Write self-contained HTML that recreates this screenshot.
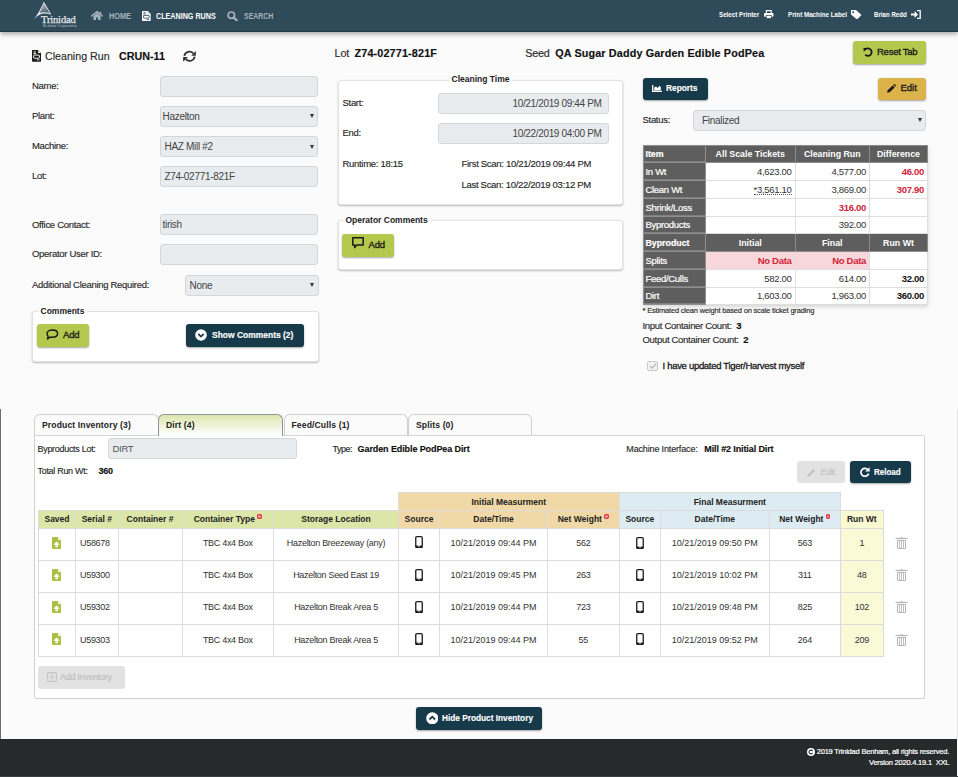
<!DOCTYPE html>
<html><head><meta charset="utf-8">
<style>
*{box-sizing:border-box;margin:0;padding:0}
html,body{width:958px;height:777px;overflow:hidden}
body{background:#fbfbfb;font-family:"Liberation Sans",sans-serif;color:#333;position:relative;font-size:10px}
.a{position:absolute;white-space:nowrap}
.t{position:absolute;white-space:nowrap;line-height:12px;height:12px;font-size:9.5px;letter-spacing:-0.3px;color:#2a2a2a;-webkit-text-stroke:0.15px currentColor}
#hdr{position:absolute;left:0;top:0;width:958px;height:32px;background:#2f4a59;border-bottom:1px solid #1f3947;box-shadow:0 2px 5px rgba(0,0,0,.35)}
.nav{position:absolute;top:11.3px;line-height:10px;font-size:8.5px;font-weight:bold;color:#a6b3ba;letter-spacing:0;transform-origin:0 0}
.navw{color:#fff}
.navr{position:absolute;top:9.6px;line-height:10px;font-size:8px;font-weight:bold;color:#fff;letter-spacing:0;transform-origin:0 0}
.inp{position:absolute;background:#e9ecef;border:1px solid #d3d7da;border-radius:3px;font-size:10px;letter-spacing:-0.3px;color:#444;padding-left:1.5px;line-height:20px;white-space:nowrap}
.sel:after{content:"";position:absolute;right:3.3px;top:7.8px;border-left:2.5px solid transparent;border-right:2.5px solid transparent;border-top:4px solid #333}
.fs{position:absolute;background:#fff;border:1px solid #e2e2e2;border-radius:3px;box-shadow:0 1px 2px rgba(0,0,0,.25)}
.lg{position:absolute;font-size:8.5px;font-weight:bold;color:#222;background:linear-gradient(#fbfbfb 50%,#fff 50%);padding:0 3px;white-space:nowrap;line-height:11px}
.btn{position:absolute;border-radius:3px;white-space:nowrap;box-shadow:0 1px 2px rgba(0,0,0,.35)}
.gbtn{background:#b4c84e;color:#222}
.dbtn{background:#173a4b;color:#fff;font-weight:bold}
.ybtn{background:#dcb24a;color:#222}
table{border-collapse:collapse;position:absolute;table-layout:fixed}
#st td{height:17.75px;padding-bottom:2px;border:1px solid #dedede;font-size:9.5px;letter-spacing:-0.3px;text-align:right;padding:0 3px;color:#333;background:#fff;white-space:nowrap;overflow:hidden}
#st td.h{background:#5e5e5e;color:#fff;font-weight:bold;text-align:center;font-size:8.8px;letter-spacing:0;border-color:#8c8c8c}
#st td.c{background:#5e5e5e;color:#fff;text-align:left;border-color:#8f8f8f;padding-left:2px;-webkit-text-stroke:0.2px #fff;box-shadow:inset 0 -0.7px 0 #8a8a8a}
#st td.c.h{font-weight:bold}
.red{color:#d0243a !important;font-weight:bold}
.pink{background:#f8d7da !important}
#it td{border:1px solid #dcdcdc;font-size:9px;letter-spacing:-0.3px;text-align:center;color:#333;background:#fff;white-space:nowrap;overflow:hidden}
#it tr.r td{height:32.2px;padding-bottom:2px}
#it td.dt{letter-spacing:0}
#it td.gh{background:#dce6a9;font-weight:bold;font-size:8.5px;letter-spacing:0;color:#222;height:17.5px}
#it td.th{background:#f0d9a6;font-weight:bold;font-size:8.5px;letter-spacing:0;color:#222}
#it td.bh{background:#dcecf2;font-weight:bold;font-size:8.5px;letter-spacing:0;color:#222}
#it td.yh{background:#fafad2;font-weight:bold;font-size:8.5px;letter-spacing:0;color:#222}
#it td.y{background:#fafad6}
#it td.n{border:none;background:transparent}
.dot{display:inline-block;width:4.5px;height:4.5px;border-radius:50%;background:#e02d3c;position:relative;top:-3.5px;margin-left:2.5px;box-shadow:inset 0 0 0 1.2px #e02d3c, inset 0 0 0 3px #f7b9bf}
.tab{position:absolute;top:413.5px;height:21.5px;border:1px solid #cfcfcf;border-bottom:none;border-radius:6px 6px 0 0;background:#fbfbfb;font-size:8.6px;font-weight:bold;color:#222;line-height:20px;padding-left:7px;letter-spacing:0.12px;white-space:nowrap}
</style></head><body>
<div id="hdr">
  <svg class="a" style="left:0;top:0" width="80" height="30" viewBox="0 0 80 30">
    <defs><linearGradient id="lg1" x1="0" y1="0" x2="0.3" y2="1"><stop offset="0" stop-color="#d8dfe3"/><stop offset="1" stop-color="#3d5866"/></linearGradient></defs>
    <path d="M43.7 2.2 L50.8 14.4 Q44 12.6 38.5 14 Q41.5 8 43.7 2.2 Z" fill="url(#lg1)"/>
    <path d="M43.7 2.2 Q39 13 32.9 20.6 Q38 14.5 43 13.6 Q47.5 13.2 50.8 14.4 L49.8 13.2 Q45 11.6 39.5 13 Q42.5 8 43.7 2.2 Z" fill="#e8edf0"/>
    <path d="M43.7 2.2 L50.8 14.4" stroke="#e8edf0" stroke-width="0.9"/>
  </svg>
  <div class="a" style="left:41px;top:14.5px;font-family:'Liberation Serif',serif;font-size:10.5px;line-height:10px;color:#e3e8eb;letter-spacing:-0.15px;-webkit-text-stroke:0.25px #e3e8eb">Trinidad</div>
  <div class="a" style="left:43px;top:23.5px;font-family:'Liberation Serif',serif;font-size:3.6px;line-height:4px;color:#c3cdd2;letter-spacing:0.2px">Benham Corporation</div>
  <svg class="a" style="left:91px;top:11px" width="12" height="9.2" viewBox="0 0 12 9.2"><path d="M0.6 5 L6 0.6 L11.4 5" stroke="#a6b3ba" stroke-width="1.5" fill="none" stroke-linecap="round"/><rect x="8.6" y="0.8" width="1.6" height="2.8" fill="#a6b3ba"/><path d="M2.4 4.9 L6 2 L9.6 4.9 V9.2 H7 V6.6 H5 V9.2 H2.4 Z" fill="#a6b3ba"/></svg>
  <div class="nav" style="left:109px;transform:scaleX(0.863)">HOME</div>
  <svg class="a" style="left:142.1px;top:10.8px" width="8.7" height="10" viewBox="0 0 8.7 10"><path d="M0 0.5 Q0 0 0.5 0 H5.7 L8.7 3 V9.5 Q8.7 10 8.2 10 H0.5 Q0 10 0 9.5 Z" fill="#fff"/><path d="M5.7 0 V3 H8.7" fill="#c9d1d5"/><rect x="1.4" y="1.3" width="2.4" height="0.8" fill="#2f4a59"/><rect x="1.4" y="2.6" width="2.4" height="0.8" fill="#2f4a59"/><rect x="1.5" y="4.4" width="5.7" height="2.7" rx="0.5" fill="none" stroke="#2f4a59" stroke-width="0.85"/><rect x="4.8" y="8" width="2.4" height="0.8" fill="#2f4a59"/></svg>
  <div class="nav navw" style="left:156.4px;transform:scaleX(0.843)">CLEANING RUNS</div>
  <svg class="a" style="left:227px;top:11px" width="11" height="10" viewBox="0 0 11 10"><circle cx="4.3" cy="4.2" r="3.2" stroke="#a6b3ba" stroke-width="1.7" fill="none"/><path d="M6.7 6.6 L9.8 9.4" stroke="#a6b3ba" stroke-width="2.2" stroke-linecap="round"/></svg>
  <div class="nav" style="left:244px;transform:scaleX(0.816)">SEARCH</div>
  <div class="navr" style="left:718.7px;transform:scaleX(0.779)">Select Printer</div>
  <svg class="a" style="left:764px;top:10px" width="9.5" height="8.5" viewBox="0 0 9.5 8.5"><path d="M2.3 3 V0.6 H7.2 V3" fill="none" stroke="#fff" stroke-width="1.1"/><rect x="0" y="3" width="9.5" height="3.8" rx="1" fill="#fff"/><rect x="2.2" y="5.4" width="5.1" height="3.1" fill="#fff" stroke="#2f4a59" stroke-width="0.7"/></svg>
  <div class="navr" style="left:788px;transform:scaleX(0.780)">Print Machine Label</div>
  <svg class="a" style="left:851px;top:9.5px" width="10.5" height="9.5" viewBox="0 0 10.5 9.5"><path d="M0 0.5 Q0 0 0.5 0 H5 L10.5 5 L6 9.5 L0 4.5 Z" fill="#fff"/><circle cx="2.2" cy="2.2" r="1" fill="#2f4a59"/></svg>
  <div class="navr" style="left:874.2px;transform:scaleX(0.768)">Brian Redd</div>
  <svg class="a" style="left:911px;top:10px" width="10" height="9" viewBox="0 0 10 9"><path d="M0 3.4 H3.6 V1 L7 4.5 L3.6 8 V5.6 H0 Z" fill="#fff"/><path d="M6 0.7 H9.2 V8.3 H6" stroke="#fff" stroke-width="1.3" fill="none"/></svg>
</div>

<!-- Title row -->
<svg class="a" style="left:31.9px;top:50px" width="9" height="11.7" viewBox="0 0 9 11.7"><path d="M0 0.6 Q0 0 0.6 0 H6 L9 3 V11.1 Q9 11.7 8.4 11.7 H0.6 Q0 11.7 0 11.1 Z" fill="#1c1c1c"/><path d="M6.1 0.2 V2.9 H8.8 Z" fill="#fff"/><rect x="1.5" y="1.5" width="2.5" height="0.9" fill="#fff"/><rect x="1.5" y="3" width="2.5" height="0.9" fill="#fff"/><rect x="1.6" y="5.1" width="5.8" height="3.1" rx="0.6" fill="none" stroke="#fff" stroke-width="0.95"/><rect x="4.9" y="9.4" width="2.5" height="0.9" fill="#fff"/></svg>
<div class="t" style="left:45.2px;top:48.5px;font-size:11.4px;letter-spacing:0;height:14px;line-height:14px;transform:scaleX(0.936);transform-origin:0 0">Cleaning Run</div>
<div class="t" style="left:119.4px;top:48.5px;font-size:11.4px;letter-spacing:0;font-weight:bold;color:#111;height:14px;line-height:14px;transform:scaleX(0.943);transform-origin:0 0">CRUN-11</div>
<svg class="a" style="left:183.1px;top:50px" width="13" height="12.6" viewBox="0 0 13 12.6"><path d="M1.3 5.9 A5.2 5.2 0 0 1 10.3 3.4" stroke="#333" stroke-width="1.75" fill="none"/><path d="M12.9 0.9 V5.7 H8.1 Z" fill="#333"/><path d="M11.7 6.7 A5.2 5.2 0 0 1 2.7 9.2" stroke="#333" stroke-width="1.75" fill="none"/><path d="M0.1 11.7 V6.9 H4.9 Z" fill="#333"/></svg>

<div class="t" style="left:334.5px;top:46px;font-size:10.8px;letter-spacing:-0.1px;height:14px;line-height:14px">Lot</div>
<div class="t" style="left:354.5px;top:46px;font-size:10.8px;letter-spacing:0.15px;font-weight:bold;color:#111;height:14px;line-height:14px">Z74-02771-821F</div>
<div class="t" style="left:525.3px;top:46px;font-size:10.8px;letter-spacing:-0.27px;height:14px;line-height:14px">Seed</div>
<div class="t" style="left:555.2px;top:46px;font-size:10.8px;letter-spacing:0.14px;font-weight:bold;color:#111;height:14px;line-height:14px">QA Sugar Daddy Garden Edible PodPea</div>

<!-- Reset tab / reports / edit -->
<div class="btn gbtn" style="left:853px;top:41.2px;width:73px;height:22.8px"></div>
<svg class="a" style="left:863px;top:47px" width="10" height="10" viewBox="0 0 10 10"><path d="M2.4 2.4 A3.7 3.7 0 1 1 2.2 7.6" stroke="#1a1a1a" stroke-width="1.8" fill="none"/><path d="M0.4 0.8 L4.4 1.2 L0.8 4.8 Z" fill="#1a1a1a"/></svg>
<div class="t" style="left:877px;top:45.7px;font-size:9.5px;letter-spacing:-0.25px;color:#1a1a1a;-webkit-text-stroke:0.35px #1a1a1a">Reset Tab</div>

<div class="btn dbtn" style="left:643px;top:77.5px;width:64.5px;height:22px"></div>
<svg class="a" style="left:652px;top:85.2px" width="10" height="7" viewBox="0 0 10 7"><path d="M0.7 0 V6.3 H10" stroke="#fff" stroke-width="1.3" fill="none"/><path d="M2.2 5.6 V2.6 L4 1.4 L5.8 3 L7.4 0.8 L8.8 2.2 V5.6 Z" fill="#fff"/></svg>
<div class="t" style="left:666px;top:82.3px;font-size:9px;font-weight:bold;letter-spacing:0;color:#fff;transform:scaleX(0.926);transform-origin:0 0">Reports</div>

<div class="btn ybtn" style="left:877.5px;top:77.5px;width:48.5px;height:22px"></div>
<svg class="a" style="left:887.2px;top:83.8px" width="9" height="9" viewBox="0 0 9 9"><path d="M0.2 8.8 L0.7 6.3 L5.6 1.4 L7.6 3.4 L2.7 8.3 Z" fill="#1a1a1a"/><path d="M6.2 0.8 L6.9 0.2 Q7.3 -0.1 7.7 0.3 L8.7 1.3 Q9.1 1.7 8.8 2.1 L8.2 2.8 Z" fill="#1a1a1a"/></svg>
<div class="t" style="left:900.5px;top:81.7px;font-size:9.5px;letter-spacing:0;color:#1a1a1a;-webkit-text-stroke:0.35px #1a1a1a">Edit</div>

<div class="t" style="left:642.5px;top:113.5px">Status:</div>
<div class="inp sel" style="left:693px;top:109.5px;width:233px;height:21px;padding-left:8px">Finalized</div>

<!-- Left form -->
<div class="t" style="left:32px;top:80px">Name:</div>
<div class="t" style="left:32px;top:110px">Plant:</div>
<div class="t" style="left:32px;top:140px">Machine:</div>
<div class="t" style="left:32px;top:170px">Lot:</div>
<div class="inp" style="left:160px;top:76px;width:158px;height:21px"></div>
<div class="inp sel" style="left:160px;top:105.5px;width:158px;height:21px">Hazelton</div>
<div class="inp sel" style="left:160px;top:136px;width:158px;height:21px;padding-left:3.5px">HAZ Mill #2</div>
<div class="inp" style="left:160px;top:166px;width:158px;height:21px;padding-left:3.5px">Z74-02771-821F</div>

<div class="t" style="left:32px;top:218.5px">Office Contact:</div>
<div class="t" style="left:32px;top:248px">Operator User ID:</div>
<div class="t" style="left:32px;top:278.5px">Additional Cleaning Required:</div>
<div class="inp" style="left:160px;top:214px;width:158px;height:21px">tirish</div>
<div class="inp" style="left:160px;top:244px;width:158px;height:21px"></div>
<div class="inp sel" style="left:185px;top:274.5px;width:133.5px;height:21px;padding-left:3.5px">None</div>

<div class="fs" style="left:32px;top:310.5px;width:286.5px;height:51px"></div>
<div class="lg" style="left:37.5px;top:305.5px">Comments</div>
<div class="btn gbtn" style="left:37px;top:324.2px;width:52px;height:22.8px"></div>
<svg class="a" style="left:46px;top:328.8px" width="12.5" height="11" viewBox="0 0 12.5 11"><path d="M6.5 0.9 C9.6 0.9 11.6 2.6 11.6 4.6 C11.6 6.6 9.6 8.3 6.5 8.3 C5.7 8.3 5 8.2 4.4 8 L1.4 9.9 L2.2 7.2 C1.4 6.5 1 5.6 1 4.6 C1 2.6 3.2 0.9 6.5 0.9 Z" fill="none" stroke="#1a1a1a" stroke-width="1.45" stroke-linejoin="round"/></svg>
<div class="t" style="left:63px;top:329px;font-size:9.5px;letter-spacing:-0.2px;color:#1a1a1a;-webkit-text-stroke:0.35px #1a1a1a">Add</div>
<div class="btn dbtn" style="left:186px;top:324px;width:118px;height:23px"></div>
<svg class="a" style="left:195px;top:328.5px" width="12" height="12" viewBox="0 0 12 12"><circle cx="6" cy="6" r="5.8" fill="#fff"/><path d="M3.3 4.8 L6 7.5 L8.7 4.8" stroke="#173a4b" stroke-width="1.7" fill="none"/></svg>
<div class="t" style="left:212px;top:329.3px;font-size:9px;font-weight:bold;letter-spacing:0;color:#fff;transform:scaleX(0.941);transform-origin:0 0">Show Comments (2)</div>

<!-- Cleaning time -->
<div class="fs" style="left:337.5px;top:79.5px;width:285.5px;height:125.5px"></div>
<div class="lg" style="left:448.5px;top:74px">Cleaning Time</div>
<div class="t" style="left:342.5px;top:97px">Start:</div>
<div class="t" style="left:342.5px;top:126.5px">End:</div>
<div class="inp" style="left:437.5px;top:93px;width:171px;height:20.5px;text-align:right;padding-right:6px;letter-spacing:-0.35px">10/21/2019 09:44 PM</div>
<div class="inp" style="left:437.5px;top:123px;width:171px;height:20.5px;text-align:right;padding-right:6px;letter-spacing:-0.35px">10/22/2019 04:00 PM</div>
<div class="t" style="left:342.5px;top:158px">Runtime: 18:15</div>
<div class="t" style="left:461.5px;top:158px">First Scan: 10/21/2019 09:44 PM</div>
<div class="t" style="left:461.5px;top:178.7px">Last Scan: 10/22/2019 03:12 PM</div>

<!-- Operator comments -->
<div class="fs" style="left:337.5px;top:220px;width:285.5px;height:50px"></div>
<div class="lg" style="left:342.5px;top:214.5px">Operator Comments</div>
<div class="btn gbtn" style="left:342px;top:233.5px;width:52px;height:23px"></div>
<svg class="a" style="left:351.8px;top:237.4px" width="12" height="11.5" viewBox="0 0 12 11.5"><path d="M0.8 0.8 H11.2 V7.9 H4.8 L2.7 10.6 V7.9 H0.8 Z" fill="none" stroke="#1a1a1a" stroke-width="1.5" stroke-linejoin="round"/></svg>
<div class="t" style="left:368.5px;top:238.5px;font-size:9.5px;letter-spacing:-0.2px;color:#1a1a1a;-webkit-text-stroke:0.35px #1a1a1a">Add</div>

<!-- Summary table -->
<table id="st" style="left:642.5px;top:144.5px;width:285.5px;box-shadow:0 2px 4px rgba(0,0,0,.15)">
<colgroup><col style="width:62.5px"><col style="width:89.5px"><col style="width:74.5px"><col style="width:58px"></colgroup>
<tr><td class="c h">Item</td><td class="h">All Scale Tickets</td><td class="h">Cleaning Run</td><td class="h">Difference</td></tr>
<tr><td class="c">In Wt</td><td>4,623.00</td><td>4,577.00</td><td class="red">46.00</td></tr>
<tr><td class="c">Clean Wt</td><td><span style="border-bottom:1px dotted #555;line-height:9px;display:inline-block">*3,561.10</span></td><td>3,869.00</td><td class="red">307.90</td></tr>
<tr><td class="c">Shrink/Loss</td><td></td><td class="red">316.00</td><td></td></tr>
<tr><td class="c">Byproducts</td><td></td><td>392.00</td><td></td></tr>
<tr><td class="c h" style="text-align:left">Byproduct</td><td class="h">Initial</td><td class="h">Final</td><td class="h">Run Wt</td></tr>
<tr><td class="c">Splits</td><td class="red pink">No Data</td><td class="red pink">No Data</td><td></td></tr>
<tr><td class="c">Feed/Culls</td><td>582.00</td><td>614.00</td><td style="font-weight:bold;color:#111">32.00</td></tr>
<tr><td class="c">Dirt</td><td>1,603.00</td><td>1,963.00</td><td style="font-weight:bold;color:#111">360.00</td></tr>
</table>
<div class="t" style="left:642.5px;top:304.5px;font-size:7.5px;letter-spacing:-0.18px">* Estimated clean weight based on scale ticket grading</div>
<div class="t" style="left:642.5px;top:320px">Input Container Count: &nbsp;<b style="color:#111">3</b></div>
<div class="t" style="left:642.5px;top:333.5px">Output Container Count: &nbsp;<b style="color:#111">2</b></div>
<div class="a" style="left:647px;top:360.5px;width:10.5px;height:10.5px;border:1px solid #c9c9c9;border-radius:2px;background:#f1f1f1"></div>
<svg class="a" style="left:648.5px;top:362px" width="8" height="8" viewBox="0 0 8 8"><path d="M1 4 L3.2 6.2 L7.2 1.6" stroke="#b5b5b5" stroke-width="1.2" fill="none"/></svg>
<div class="t" style="left:662.5px;top:360px;color:#1a1a1a;-webkit-text-stroke:0.3px #1a1a1a">I have updated Tiger/Harvest myself</div>

<!-- Tabs -->
<div class="a" style="left:34px;top:434.5px;width:890.5px;height:264px;border:1px solid #cdd0d3;border-top-color:#d5d5d5;background:#fff;border-radius:0 2px 2px 2px"></div>
<div class="tab" style="left:34px;width:124.5px">Product Inventory (3)</div>
<div class="tab" style="left:158px;width:125px;height:22.5px;border-color:#8e959c;background:linear-gradient(#dce6ad,#fff 95%)">Dirt (4)</div>
<div class="tab" style="left:283.5px;width:124.5px">Feed/Culls (1)</div>
<div class="tab" style="left:408px;width:124px">Splits (0)</div>

<div class="t" style="left:37.5px;top:443px;font-size:9px">Byproducts Lot:</div>
<div class="inp" style="left:108px;top:437.8px;width:189px;height:21px;padding-left:3.5px;font-size:9.5px;color:#555">DIRT</div>
<div class="t" style="left:332.5px;top:443px;font-size:9px;letter-spacing:-0.5px">Type:</div><div class="t" style="left:357.6px;top:443px;font-size:9px;font-weight:bold;color:#111;letter-spacing:-0.1px">Garden Edible PodPea Dirt</div>
<div class="t" style="left:626.3px;top:443px;font-size:9px;letter-spacing:-0.15px">Machine Interface:</div><div class="t" style="left:704.3px;top:443px;font-size:9px;font-weight:bold;color:#111;letter-spacing:-0.12px">Mill #2 Initial Dirt</div>
<div class="t" style="left:37.5px;top:465px;font-size:9px">Total Run Wt:</div><div class="t" style="left:98.5px;top:465px;font-size:9px;font-weight:bold;color:#111">360</div>

<div class="a" style="left:797px;top:461px;width:48px;height:22px;background:#e2e2e2;border-radius:3px"></div>
<svg class="a" style="left:807px;top:467.5px" width="9" height="9" viewBox="0 0 9 9"><path d="M0.3 8.7 L0.8 6.4 L6.3 0.9 L8.1 2.7 L2.6 8.2 Z" fill="#c2c2c2"/></svg>
<div class="t" style="left:820.5px;top:466px;font-size:9px;color:#c2c2c2">Edit</div>
<div class="btn dbtn" style="left:850px;top:460.5px;width:60.5px;height:22.5px"></div>
<svg class="a" style="left:859.5px;top:466.5px" width="10" height="10" viewBox="0 0 10 10"><path d="M8.2 3.3 A3.9 3.9 0 1 0 8.6 6.4" stroke="#fff" stroke-width="1.7" fill="none"/><path d="M9.6 0.2 V4.6 H5.2 Z" fill="#fff"/></svg>
<div class="t" style="left:873.8px;top:465.6px;font-size:9px;font-weight:bold;letter-spacing:0;color:#fff;transform:scaleX(0.89);transform-origin:0 0">Reload</div>


<!-- Inventory table -->
<table id="it" style="left:38px;top:492px;width:844.5px">
<colgroup><col style="width:37px"><col style="width:42.5px"><col style="width:64px"><col style="width:91.5px"><col style="width:125px"><col style="width:41px"><col style="width:108px"><col style="width:71.5px"><col style="width:41.5px"><col style="width:108.5px"><col style="width:71.5px"><col style="width:42.5px"></colgroup>
<tr><td class="n" colspan="5" style="height:18px"></td><td class="th" colspan="3">Initial Measurment</td><td class="bh" colspan="3">Final Measurment</td><td class="n"></td></tr>
<tr><td class="gh">Saved</td><td class="gh">Serial #</td><td class="gh">Container #</td><td class="gh">Container Type<span class="dot"></span></td><td class="gh">Storage Location</td><td class="th">Source</td><td class="th">Date/Time</td><td class="th">Net Weight<span class="dot"></span></td><td class="bh">Source</td><td class="bh">Date/Time</td><td class="bh">Net Weight<span class="dot"></span></td><td class="yh">Run Wt</td></tr>
<tr class="r"><td></td><td style="text-align:left;padding-left:4px">U58678</td><td></td><td>TBC 4x4 Box</td><td>Hazelton Breezeway (any)</td><td></td><td class="dt">10/21/2019 09:44 PM</td><td>562</td><td></td><td class="dt">10/21/2019 09:50 PM</td><td>563</td><td class="y">1</td></tr>
<tr class="r"><td></td><td style="text-align:left;padding-left:4px">U59300</td><td></td><td>TBC 4x4 Box</td><td>Hazelton Seed East 19</td><td></td><td class="dt">10/21/2019 09:45 PM</td><td>263</td><td></td><td class="dt">10/21/2019 10:02 PM</td><td>311</td><td class="y">48</td></tr>
<tr class="r"><td></td><td style="text-align:left;padding-left:4px">U59302</td><td></td><td>TBC 4x4 Box</td><td>Hazelton Break Area 5</td><td></td><td class="dt">10/21/2019 09:44 PM</td><td>723</td><td></td><td class="dt">10/21/2019 09:48 PM</td><td>825</td><td class="y">102</td></tr>
<tr class="r"><td></td><td style="text-align:left;padding-left:4px">U59303</td><td></td><td>TBC 4x4 Box</td><td>Hazelton Break Area 5</td><td></td><td class="dt">10/21/2019 09:44 PM</td><td>55</td><td></td><td class="dt">10/21/2019 09:52 PM</td><td>264</td><td class="y">209</td></tr>

</table>

<div class="a" style="left:38px;top:666px;width:87px;height:22.5px;background:#e2e2e2;border-radius:3px"></div>
<svg class="a" style="left:47px;top:672px" width="10" height="10" viewBox="0 0 10 10"><rect x="0.6" y="0.6" width="8.8" height="8.8" rx="1" fill="none" stroke="#c5c5c5" stroke-width="1.1"/><path d="M5 2.5 V7.5 M2.5 5 H7.5" stroke="#c5c5c5" stroke-width="1.1"/></svg>
<div class="t" style="left:60px;top:671px;font-size:9px;color:#c0c0c0">Add Inventory</div>

<div class="btn dbtn" style="left:416px;top:707px;width:126px;height:22.5px"></div>
<svg class="a" style="left:425.5px;top:711.5px" width="12.5" height="12.5" viewBox="0 0 12 12"><circle cx="6" cy="6" r="5.8" fill="#fff"/><path d="M3.3 7.2 L6 4.5 L8.7 7.2" stroke="#173a4b" stroke-width="1.7" fill="none"/></svg>
<div class="t" style="left:441.7px;top:712.1px;font-size:9px;font-weight:bold;letter-spacing:0;color:#fff;transform:scaleX(0.919);transform-origin:0 0">Hide Product Inventory</div>

<div class="a" style="left:0;top:409px;width:1px;height:330px;background:#6e6e6e"></div>
<div class="a" style="left:957px;top:409px;width:1px;height:330px;background:#e6e6e6"></div>
<!-- Footer -->
<div class="a" style="left:0;top:776px;width:958px;height:1px;background:#3a3f40;z-index:2"></div>
<div class="a" style="left:0;top:738.5px;width:957px;height:38.5px;background:#262a2b"></div>
<svg class="a" style="left:807px;top:748px" width="8" height="8" viewBox="0 0 8 8"><circle cx="4" cy="4" r="4" fill="#fff"/><path d="M5.6 3 A1.9 1.9 0 1 0 5.6 5" stroke="#262a2b" stroke-width="1.1" fill="none"/></svg>
<div class="t" style="left:816.7px;top:746.3px;font-size:7.5px;letter-spacing:-0.2px;color:#fff;-webkit-text-stroke:0.2px #fff">2019 Trinidad Benham, all rights reserved.</div>
<div class="t" style="left:869px;top:757.3px;font-size:7.5px;letter-spacing:-0.2px;color:#fff;-webkit-text-stroke:0.2px #fff">Version 2020.4.19.1 &nbsp;XXL</div>
<svg class="a" style="left:51.7px;top:536.5px" width="9.2" height="12" viewBox="0 0 9.2 12"><path d="M0 1 Q0 0 1 0 H6.2 L9.2 3 V11 Q9.2 12 8.2 12 H1 Q0 12 0 11 Z" fill="#a9c243"/><path d="M6.2 0.2 V2.2 Q6.2 3 7 3 H9.2" fill="#fff" stroke="#e6eccd" stroke-width="0.5"/><path d="M4.6 4.6 L7.8 7.8 H5.7 V10.3 H3.5 V7.8 H1.4 Z" fill="#fff"/></svg>
<svg class="a" style="left:414.8px;top:536.3px" width="8" height="12.2" viewBox="-0.1 0 8 12.2"><rect x="0.65" y="0.65" width="6.5" height="10.9" rx="1.2" fill="none" stroke="#1a1a1a" stroke-width="1.3"/><rect x="0.6" y="9.6" width="2.8" height="2.2" fill="#1a1a1a"/><rect x="4.4" y="9.6" width="2.8" height="2.2" fill="#1a1a1a"/></svg>
<svg class="a" style="left:635.6px;top:536.5px" width="8" height="12.2" viewBox="-0.1 0 8 12.2"><rect x="0.65" y="0.65" width="6.5" height="10.9" rx="1.2" fill="none" stroke="#1a1a1a" stroke-width="1.3"/><rect x="0.6" y="9.6" width="2.8" height="2.2" fill="#1a1a1a"/><rect x="4.4" y="9.6" width="2.8" height="2.2" fill="#1a1a1a"/></svg>
<svg class="a" style="left:895px;top:536px" width="13" height="14" viewBox="0 0 13 14"><path d="M0.5 2.5 H12.5" stroke="#b5b5b5" stroke-width="1.2"/><path d="M4.5 2 Q6.5 0.3 8.5 2 Z" fill="#b5b5b5"/><path d="M2.5 4.5 H10.5 V12 Q10.5 12.5 10 12.5 H3 Q2.5 12.5 2.5 12 Z" fill="none" stroke="#b5b5b5" stroke-width="1"/><path d="M4.5 5 V12 M6.5 5 V12 M8.5 5 V12" stroke="#c2c2c2" stroke-width="1"/></svg>
<svg class="a" style="left:51.7px;top:568.7px" width="9.2" height="12" viewBox="0 0 9.2 12"><path d="M0 1 Q0 0 1 0 H6.2 L9.2 3 V11 Q9.2 12 8.2 12 H1 Q0 12 0 11 Z" fill="#a9c243"/><path d="M6.2 0.2 V2.2 Q6.2 3 7 3 H9.2" fill="#fff" stroke="#e6eccd" stroke-width="0.5"/><path d="M4.6 4.6 L7.8 7.8 H5.7 V10.3 H3.5 V7.8 H1.4 Z" fill="#fff"/></svg>
<svg class="a" style="left:414.8px;top:568.5px" width="8" height="12.2" viewBox="-0.1 0 8 12.2"><rect x="0.65" y="0.65" width="6.5" height="10.9" rx="1.2" fill="none" stroke="#1a1a1a" stroke-width="1.3"/><rect x="0.6" y="9.6" width="2.8" height="2.2" fill="#1a1a1a"/><rect x="4.4" y="9.6" width="2.8" height="2.2" fill="#1a1a1a"/></svg>
<svg class="a" style="left:635.6px;top:568.7px" width="8" height="12.2" viewBox="-0.1 0 8 12.2"><rect x="0.65" y="0.65" width="6.5" height="10.9" rx="1.2" fill="none" stroke="#1a1a1a" stroke-width="1.3"/><rect x="0.6" y="9.6" width="2.8" height="2.2" fill="#1a1a1a"/><rect x="4.4" y="9.6" width="2.8" height="2.2" fill="#1a1a1a"/></svg>
<svg class="a" style="left:895px;top:568px" width="13" height="14" viewBox="0 0 13 14"><path d="M0.5 2.5 H12.5" stroke="#b5b5b5" stroke-width="1.2"/><path d="M4.5 2 Q6.5 0.3 8.5 2 Z" fill="#b5b5b5"/><path d="M2.5 4.5 H10.5 V12 Q10.5 12.5 10 12.5 H3 Q2.5 12.5 2.5 12 Z" fill="none" stroke="#b5b5b5" stroke-width="1"/><path d="M4.5 5 V12 M6.5 5 V12 M8.5 5 V12" stroke="#c2c2c2" stroke-width="1"/></svg>
<svg class="a" style="left:51.7px;top:600.9px" width="9.2" height="12" viewBox="0 0 9.2 12"><path d="M0 1 Q0 0 1 0 H6.2 L9.2 3 V11 Q9.2 12 8.2 12 H1 Q0 12 0 11 Z" fill="#a9c243"/><path d="M6.2 0.2 V2.2 Q6.2 3 7 3 H9.2" fill="#fff" stroke="#e6eccd" stroke-width="0.5"/><path d="M4.6 4.6 L7.8 7.8 H5.7 V10.3 H3.5 V7.8 H1.4 Z" fill="#fff"/></svg>
<svg class="a" style="left:414.8px;top:600.7px" width="8" height="12.2" viewBox="-0.1 0 8 12.2"><rect x="0.65" y="0.65" width="6.5" height="10.9" rx="1.2" fill="none" stroke="#1a1a1a" stroke-width="1.3"/><rect x="0.6" y="9.6" width="2.8" height="2.2" fill="#1a1a1a"/><rect x="4.4" y="9.6" width="2.8" height="2.2" fill="#1a1a1a"/></svg>
<svg class="a" style="left:635.6px;top:600.9px" width="8" height="12.2" viewBox="-0.1 0 8 12.2"><rect x="0.65" y="0.65" width="6.5" height="10.9" rx="1.2" fill="none" stroke="#1a1a1a" stroke-width="1.3"/><rect x="0.6" y="9.6" width="2.8" height="2.2" fill="#1a1a1a"/><rect x="4.4" y="9.6" width="2.8" height="2.2" fill="#1a1a1a"/></svg>
<svg class="a" style="left:895px;top:600px" width="13" height="14" viewBox="0 0 13 14"><path d="M0.5 2.5 H12.5" stroke="#b5b5b5" stroke-width="1.2"/><path d="M4.5 2 Q6.5 0.3 8.5 2 Z" fill="#b5b5b5"/><path d="M2.5 4.5 H10.5 V12 Q10.5 12.5 10 12.5 H3 Q2.5 12.5 2.5 12 Z" fill="none" stroke="#b5b5b5" stroke-width="1"/><path d="M4.5 5 V12 M6.5 5 V12 M8.5 5 V12" stroke="#c2c2c2" stroke-width="1"/></svg>
<svg class="a" style="left:51.7px;top:633.1px" width="9.2" height="12" viewBox="0 0 9.2 12"><path d="M0 1 Q0 0 1 0 H6.2 L9.2 3 V11 Q9.2 12 8.2 12 H1 Q0 12 0 11 Z" fill="#a9c243"/><path d="M6.2 0.2 V2.2 Q6.2 3 7 3 H9.2" fill="#fff" stroke="#e6eccd" stroke-width="0.5"/><path d="M4.6 4.6 L7.8 7.8 H5.7 V10.3 H3.5 V7.8 H1.4 Z" fill="#fff"/></svg>
<svg class="a" style="left:414.8px;top:632.9px" width="8" height="12.2" viewBox="-0.1 0 8 12.2"><rect x="0.65" y="0.65" width="6.5" height="10.9" rx="1.2" fill="none" stroke="#1a1a1a" stroke-width="1.3"/><rect x="0.6" y="9.6" width="2.8" height="2.2" fill="#1a1a1a"/><rect x="4.4" y="9.6" width="2.8" height="2.2" fill="#1a1a1a"/></svg>
<svg class="a" style="left:635.6px;top:633.1px" width="8" height="12.2" viewBox="-0.1 0 8 12.2"><rect x="0.65" y="0.65" width="6.5" height="10.9" rx="1.2" fill="none" stroke="#1a1a1a" stroke-width="1.3"/><rect x="0.6" y="9.6" width="2.8" height="2.2" fill="#1a1a1a"/><rect x="4.4" y="9.6" width="2.8" height="2.2" fill="#1a1a1a"/></svg>
<svg class="a" style="left:895px;top:633px" width="13" height="14" viewBox="0 0 13 14"><path d="M0.5 2.5 H12.5" stroke="#b5b5b5" stroke-width="1.2"/><path d="M4.5 2 Q6.5 0.3 8.5 2 Z" fill="#b5b5b5"/><path d="M2.5 4.5 H10.5 V12 Q10.5 12.5 10 12.5 H3 Q2.5 12.5 2.5 12 Z" fill="none" stroke="#b5b5b5" stroke-width="1"/><path d="M4.5 5 V12 M6.5 5 V12 M8.5 5 V12" stroke="#c2c2c2" stroke-width="1"/></svg>
</body></html>
